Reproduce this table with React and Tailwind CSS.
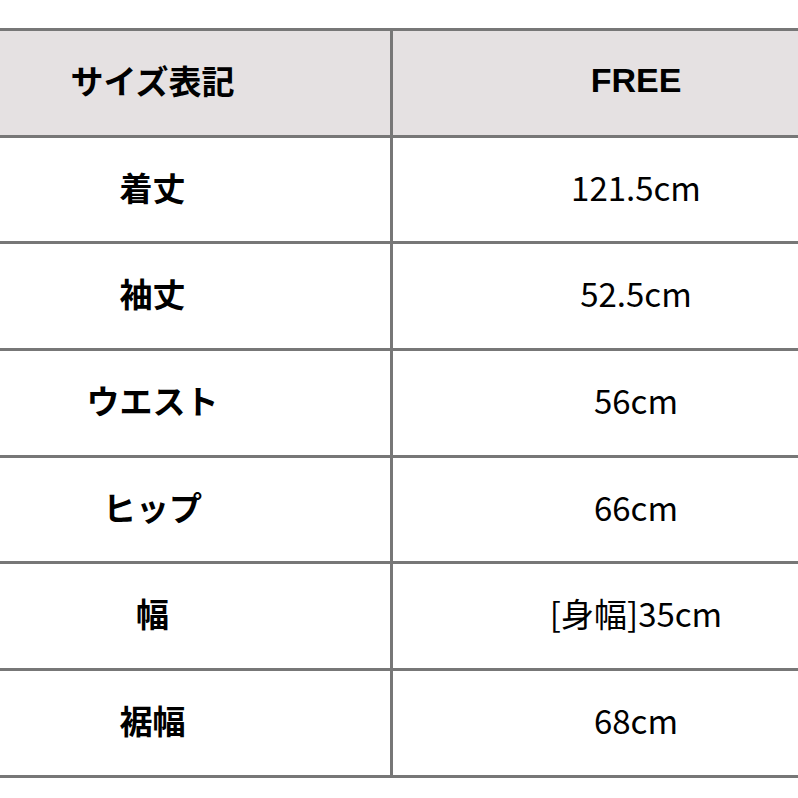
import React from "react";

const rows = [
  ["着丈", "121.5cm"],
  ["袖丈", "52.5cm"],
  ["ウエスト", "56cm"],
  ["ヒップ", "66cm"],
  ["幅", "[身幅]35cm"],
  ["裾幅", "68cm"],
];

export default function App() {
  return (
    <div
      className="w-[798px] h-[798px] bg-white overflow-hidden pt-[28px]"
      style={{ fontFamily: '"Noto Sans CJK JP", "Noto Sans", sans-serif' }}
    >
      <div className="ml-[-85px] w-[964px] border-t-[3px] border-[#777777] text-black">
        {/* Header */}
        <div className="flex h-[106.5px] border-b-[3px] border-[#777777] bg-[#e5e1e2]">
          <div className="w-[478px] border-r-[3px] border-[#777777] flex items-center justify-center pb-[4px] text-[33px] font-bold">
            サイズ表記
          </div>
          <div className="flex-1 flex items-center justify-center pb-[4px] text-[34px] font-bold font-['Liberation_Sans',_Arial,_sans-serif]">
            FREE
          </div>
        </div>

        {rows.map(([label, value]) => (
          <div key={label} className="flex h-[106.7px] border-b-[3px] border-[#777777]">
            <div className="w-[478px] border-r-[3px] border-[#777777] flex items-center justify-center pb-[4px] text-[33px] font-bold">
              {label}
            </div>
            <div className="flex-1 flex items-center justify-center pb-[4px] text-[33px]">
              {value}
            </div>
          </div>
        ))}
      </div>
    </div>
  );
}
